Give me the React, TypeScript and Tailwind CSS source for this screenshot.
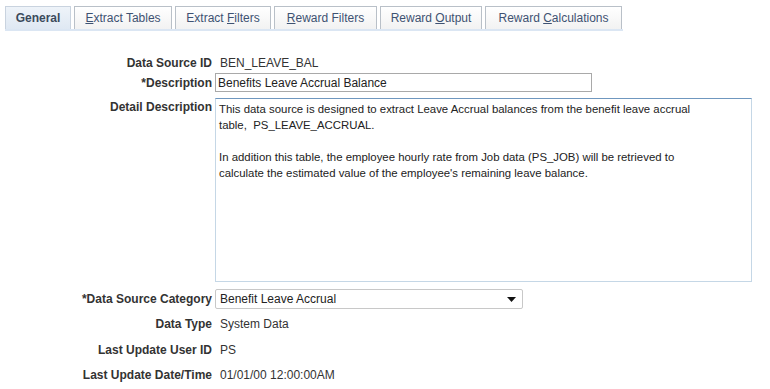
import React from 'react';

const tabs = [
  { pre: '', key: '', post: 'General', active: true, w: 'w-[66px]' },
  { pre: '', key: 'E', post: 'xtract Tables', active: false, w: 'w-[98px]' },
  { pre: 'Extract ', key: 'F', post: 'ilters', active: false, w: 'w-[96px]' },
  { pre: '', key: 'R', post: 'eward Filters', active: false, w: 'w-[103px]' },
  { pre: 'Reward ', key: 'O', post: 'utput', active: false, w: 'w-[102px]' },
  { pre: 'Reward ', key: 'C', post: 'alculations', active: false, w: 'w-[137px]' },
];

const Label: React.FC<{ children: React.ReactNode; top?: boolean }> = ({ children, top }) => (
  <div className={`w-[212px] shrink-0 text-right font-bold text-[#333333] ${top ? 'pt-[2px]' : ''}`}>{children}</div>
);

const App: React.FC = () => {
  return (
    <div
      className="w-[770px] h-[389px] bg-white text-[12px] leading-[14px] text-[#333333] overflow-hidden"
      style={{ fontFamily: "'Liberation Sans', Arial, sans-serif" }}
    >
      <div className="pt-[6px] pl-[5px]">
        <div className="flex gap-[3px] w-[618px]">
          {tabs.map((t, i) => (
            <div
              key={i}
              className={`${t.w} h-[23px] flex items-center justify-center border border-b-0 ${
                t.active
                  ? 'border-[#c9d3df] bg-gradient-to-b from-[#eef3f9] to-[#dfe8f3] font-bold text-[#3b4a5c]'
                  : 'border-[#b9c0c8] bg-gradient-to-b from-white to-[#f2f2f2] text-[#3e5272]'
              }`}
            >
              <span className="whitespace-pre">
                {t.pre}
                {t.key && <span className="underline">{t.key}</span>}
                {t.post}
              </span>
            </div>
          ))}
        </div>
        <div className="w-[618px] h-[2px] bg-[#dbe6f3]" />
      </div>

      <div className="flex flex-col mt-[23px]">
        <div className="flex items-center h-[18px] gap-[3px]">
          <Label>Data Source ID</Label>
          <div className="pl-[5px]">BEN_LEAVE_BAL</div>
        </div>
        <div className="flex items-center mt-[1px] gap-[3px]">
          <Label>*Description</Label>
          <div className="w-[377px] h-[19px] border border-[#a9a9a9] flex items-center pl-[2px] text-[#222]">
            Benefits Leave Accrual Balance
          </div>
        </div>
        <div className="flex items-start mt-[6px] gap-[3px]">
          <Label top>Detail Description</Label>
          <div className="w-[537px] h-[184px] border border-[#c5d7e6] border-t-[#6f97bf] pl-[3px] pt-[2px] text-[11.4px] leading-[16px] text-[#222] whitespace-nowrap">
            This data source is designed to extract Leave Accrual balances from the benefit leave accrual
            <br />
            table,&nbsp; PS_LEAVE_ACCRUAL.
            <br />
            <br />
            In addition this table, the employee hourly rate from Job data (PS_JOB) will be retrieved to
            <br />
            calculate the estimated value of the employee's remaining leave balance.
          </div>
        </div>
        <div className="flex items-center mt-[7px] gap-[3px]">
          <Label>*Data Source Category</Label>
          <div className="w-[308px] h-[20px] border border-[#c8c8c8] rounded-[2px] flex items-center justify-between pl-[4px] pr-[6px] text-[#222]">
            <span>Benefit Leave Accrual</span>
            <svg width="9" height="5" viewBox="0 0 9 5">
              <path d="M0 0h9L4.5 5z" fill="#111" />
            </svg>
          </div>
        </div>
        <div className="flex items-center h-[18px] mt-[6px] gap-[3px]">
          <Label>Data Type</Label>
          <div className="pl-[5px]">System Data</div>
        </div>
        <div className="flex items-center h-[18px] mt-[8px] gap-[3px]">
          <Label>Last Update User ID</Label>
          <div className="pl-[5px]">PS</div>
        </div>
        <div className="flex items-center h-[18px] mt-[7px] gap-[3px]">
          <Label>Last Update Date/Time</Label>
          <div className="pl-[5px]">01/01/00 12:00:00AM</div>
        </div>
      </div>
    </div>
  );
};

export default App;
